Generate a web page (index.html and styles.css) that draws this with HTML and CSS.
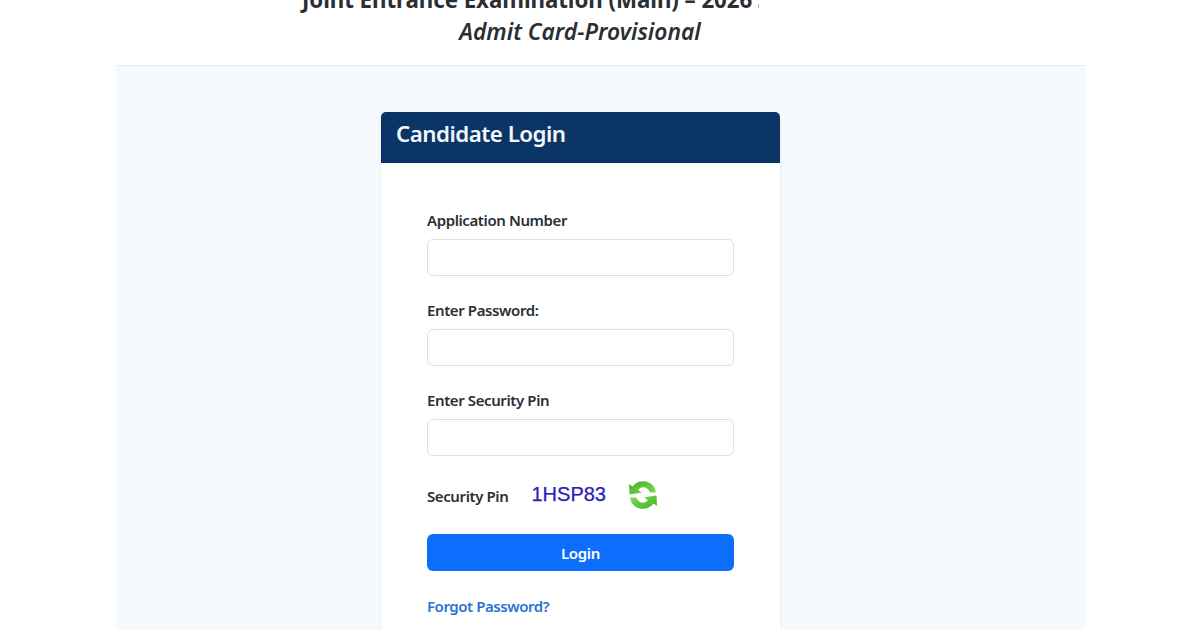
FILE: index.html
```html
<!DOCTYPE html>
<html lang="en">
<head>
  <meta charset="UTF-8">
  <meta name="viewport" content="width=device-width,initial-scale=1.0">
  <title>Candidate Login</title>
  <link rel="stylesheet" href="styles.css">
</head>
<body>

  <div class="page">
    <header class="exam-header">
      <h1>Joint Entrance Examination (Main) – 2026<span class="sliver"></span></h1>
      <h2>Admit Card-Provisional</h2>
    </header>

    <main class="content">
      <form class="card">
        <div class="card-header">Candidate Login</div>
        <div class="card-body">
          <div class="field">
            <label for="app-no">Application Number</label>
            <input type="text" id="app-no">
          </div>
          <div class="field">
            <label for="password">Enter Password:</label>
            <input type="password" id="password">
          </div>
          <div class="field">
            <label for="pin">Enter Security Pin</label>
            <input type="text" id="pin">
          </div>

          <div class="pin-row">
            <span class="pin-label">Security Pin</span>
            <span class="captcha">1HSP83</span>
            <svg class="refresh" viewBox="0 0 30 30">
              <defs>
                <linearGradient id="green" x1="0" y1="0" x2="1" y2="1">
                  <stop offset="0" stop-color="#43b022"/>
                  <stop offset="1" stop-color="#86dc58"/>
                </linearGradient>
              </defs>
              <path id="arrow" fill="url(#green)" d="M1 4 L4.500 6.500 C10 -.8 22 -.8 27 8.500 L27.800 12.500 L22 12.500 C19.500 7 14 5.500 10.200 9.800 L13.500 12.800 L1.500 14.500 Z"/>
              <use href="#arrow" transform="rotate(180 15 15)"/>
            </svg>
          </div>

          <button type="button" class="login-btn">Login</button>
          <a class="forgot" href="#">Forgot Password?</a>
        </div>
      </form>
    </main>
  </div>

</body>
</html>
```

FILE: styles.css
```css
*,*::before,*::after { box-sizing:border-box; margin:0; padding:0 }
body {
  background: #fff;
  color: #2b2f33;
  font-family: 'Noto Sans', 'Open Sans', sans-serif;
  font-size: 15px;
  height: 630px;
  overflow: hidden;
}
.page {
  width: 969px;
  height: 630px;
  margin-left: 116px;
  display: flex;
  flex-direction: column;
}
.exam-header {
  height: 66px;
  flex: none;
  border-bottom: 1px solid #e8e8ec;
}
.exam-header h1 {
  margin-top: -16px;
  padding-left: 186px;
  font-size: 22.3px;
  line-height: 32px;
  font-weight: 700;
  letter-spacing: -0.06px;
  white-space: nowrap;
}
/* what is left of the cut off session name */
.sliver {
  display: inline-block;
  width: 1px;
  height: 4px;
  margin-left: 6px;
  background: #a9abad;
}
.exam-header h2 {
  width: 928px;
  text-align: center;
  font-size: 22.8px;
  line-height: 31px;
  font-weight: 600;
  font-style: italic;
}
.content {
  flex: 1;
  min-height: 0;
  padding: 46px 0 0 265px;
  background: #f7fafc;
}
.card {
  width: 399px;
  height: 100%;
  background: #fff;
  border-radius: 5px 5px 0 0;
  box-shadow: 0 2px 4px rgba(0,0,0,0.06);
}
.card-header {
  height: 51px;
  padding: 6px 15px;
  border-radius: 5px 5px 0 0;
  background: #0b3467;
  color: #f4f8fc;
  font-size: 22.3px;
  line-height: 32px;
  font-weight: 600;
  letter-spacing: -0.5px;
}
.card-body {
  padding: 45px 46px 0;
  display: flex;
  flex-direction: column;
}
.field {
  margin-bottom: 22px;
}
.field label {
  display: block;
  margin-bottom: 7px;
  line-height: 24px;
  font-weight: 600;
  letter-spacing: -0.4px;
}
.field input {
  display: block;
  width: 307px;
  height: 37px;
  padding: 6px 12px;
  border: 1px solid #dcdfe3;
  border-radius: 6px;
  background: #fff;
  font: inherit;
}
.pin-row {
  height: 34px;
  margin-bottom: 22px;
  display: flex;
  align-items: center;
}
.pin-label {
  width: 104.5px;
  padding-top: 1px;
  font-weight: 600;
  letter-spacing: -0.4px;
}
.captcha {
  width: 96.5px;
  padding-bottom: 2px;
  color: #2a20b8;
  font-family: 'Liberation Sans', sans-serif;
  font-size: 20px;
  -webkit-text-stroke: 0.25px #2a20b8;
}
.refresh {
  width: 30px;
  height: 30px;
}
.login-btn {
  height: 37px;
  border: none;
  border-radius: 6px;
  background: #0d6efd;
  color: #fff;
  font: inherit;
  font-weight: 600;
  letter-spacing: -0.3px;
}
.forgot {
  margin-top: 23px;
  line-height: 24px;
  font-weight: 600;
  letter-spacing: -0.45px;
  color: #2b73d2;
  text-decoration: none;
}
```
